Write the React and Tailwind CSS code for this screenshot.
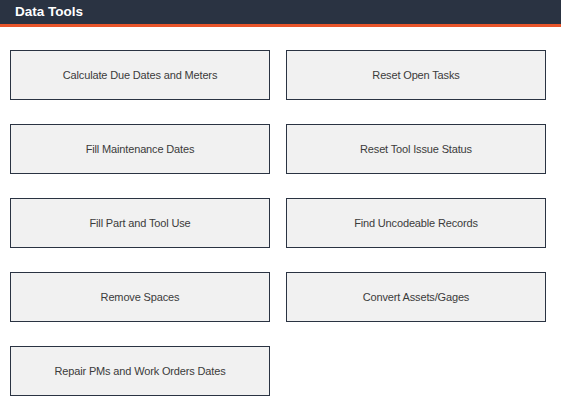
import React from "react";

const items = [
  "Calculate Due Dates and Meters",
  "Reset Open Tasks",
  "Fill Maintenance Dates",
  "Reset Tool Issue Status",
  "Fill Part and Tool Use",
  "Find Uncodeable Records",
  "Remove Spaces",
  "Convert Assets/Gages",
  "Repair PMs and Work Orders Dates",
];

export default function App() {
  return (
    <div className="w-[561px] h-[409px] bg-white" style={{ fontFamily: '"Liberation Sans", Arial, sans-serif' }}>
      <div className="h-[24px] bg-[#2a3342] flex items-center pl-[15px]">
        <span className="text-white font-bold text-[13.5px] leading-none">Data Tools</span>
      </div>
      <div className="h-[3px] bg-[#e8552a]" />
      <div className="grid grid-cols-[260px_260px] gap-x-[16px] gap-y-[24px] pl-[10px] pt-[23px]">
        {items.map((t) => (
          <button
            key={t}
            className="h-[50px] border border-[#2a3342] bg-[#f1f1f1] text-[#3b3b3b] text-[11px] tracking-[-0.15px] flex items-center justify-center"
          >
            {t}
          </button>
        ))}
      </div>
    </div>
  );
}
